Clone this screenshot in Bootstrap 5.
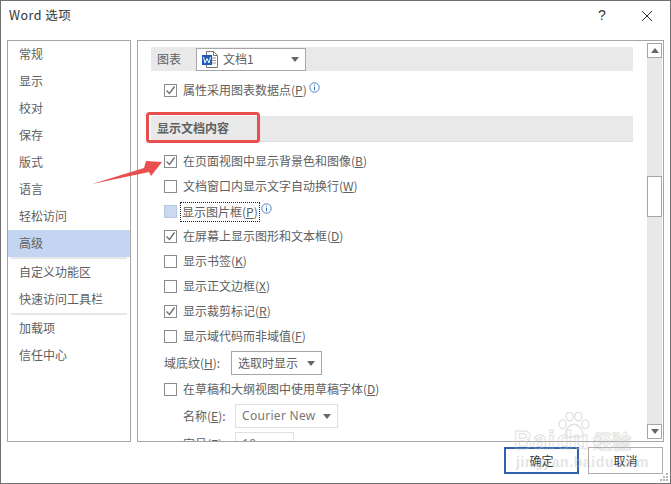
<!DOCTYPE html>
<html lang="zh">
<head>
<meta charset="utf-8">
<title>Word 选项</title>
<link href="https://cdn.jsdelivr.net/npm/bootstrap@5.3.0/dist/css/bootstrap.min.css" rel="stylesheet">
<style>
html,body{margin:0;height:484px;overflow:hidden;background:#fff}
body{font-family:"Noto Sans CJK SC","Noto Sans",sans-serif;font-size:12px;color:#606060;line-height:1.2}
u{text-underline-offset:1px}
.dlg{width:671px;height:484px;border:1px solid #6f6f6f;position:relative;background:#fff;overflow:hidden}
.dlg-title{height:39px;padding:0 0 0 8px;color:#333;font-size:12.5px}
.dlg-title .name{margin-top:-13px;letter-spacing:.5px}
.t-help{position:absolute;left:597px;top:6px;font-size:14px;color:#333;font-family:"Liberation Sans",sans-serif}
.t-close{position:absolute;left:640px;top:9px}
.dlg-body{height:402px;padding:0 7px 0 6px;gap:6px}
.side{width:124px;height:402px;border:1px solid #a6a6a6;flex:none}
.side-item{height:27px;padding:0 0 0 11px;color:#606060}
.side-item.on{background:#c3d5f0}
.side-sep{height:2px;margin:0 3px;background:#e6e6e6}
.pane{width:527px;height:402px;border:1px solid #a6a6a6;flex:none;overflow:hidden;position:relative}
.pane-in{width:482px;margin-left:13px;padding-top:6px}
.sec{background:#e9e9e9;padding-left:6px}
.sec1{height:24px}
.sec2{height:26px;margin-top:13px;font-weight:700;border-bottom:1px solid #ddd}
.opt{height:25px;padding-left:13px;gap:6px;white-space:nowrap;flex:none}
.opt-top{margin-top:7px}
.opt-sel{height:28px;gap:0}
.opt-sub{height:28px;padding-left:32px;gap:0}
.box{width:13px;height:13px;border:1px solid #8b8b8b;background:#fff;flex:none;display:flex;align-items:center;justify-content:center}
.box.dis{background:#ccd9ed;border-color:#b5c7e2}
.focus{outline:1px dotted #222;outline-offset:0;padding:0 1px;margin-left:-2px;line-height:18px}
.info{margin:-6px 0 0 -4px}
.info-f{margin:-6px 0 0 -4px}
.dd{height:24px;border:1px solid #a6a6a6;background:#fff;padding:0 0 0 6px;flex:none;white-space:nowrap}
.dd.lt{border-color:#e0e0e0}
.caret{width:0;height:0;border:4px solid transparent;border-top:5px solid #666;border-bottom:0;margin-left:auto;margin-right:6px}
.dd-doc{width:110px;margin-left:15px;height:23px;padding-left:5px;gap:5px}
.dd-sel{width:91px}
.dd-name{width:103px}
.dd-size{width:59px}
.lab{width:67px}
.lab-sub{width:52px}
.latin{font-family:"Noto Sans",sans-serif;color:#777;letter-spacing:.3px}
.scroll{position:absolute;left:509px;top:2px;width:15px;height:396px;background:#e8e8e8}
.sb-btn{width:15px;height:15px;background:#fff;border:1px solid #a6a6a6;position:absolute;left:0;display:flex;align-items:center;justify-content:center}
.sb-up{top:0}
.sb-dn{bottom:0}
.thumb{width:15px;height:41px;background:#fff;border:1px solid #a6a6a6;position:absolute;left:0;top:133px}
.up{width:0;height:0;border:4px solid transparent;border-bottom:5px solid #666;border-top:0}
.dn{width:0;height:0;border:4px solid transparent;border-top:5px solid #666;border-bottom:0}
.foot{padding:5px 7px 0 0;gap:9px}
.act{width:75px;height:27px;border:1px solid #adadad;background:#fff;color:#333;font-size:12px;padding:0;border-radius:0;line-height:1}
.act.pri{border:2px solid #2f62ae}
.mark-anno{position:absolute;left:-1px;top:-1px;pointer-events:none}
.wm{position:absolute;left:513px;top:425px;opacity:.45;pointer-events:none;white-space:nowrap}
.wm1{font:700 25px "Liberation Sans",sans-serif;position:absolute;left:0;top:0;color:transparent;-webkit-text-stroke:1px #bdbdbd;letter-spacing:1px}
.wm1b{left:43px}
.wm2{font:700 19px "Noto Sans CJK SC",sans-serif;position:absolute;left:79px;top:1px;color:transparent;-webkit-text-stroke:1px #bdbdbd}
.wm3{font:700 14px "Liberation Sans",sans-serif;position:absolute;left:2px;top:28px;color:#c4c4c4;letter-spacing:.6px}
.paw{position:absolute;left:42px;top:-14px}
.grip{position:absolute;right:1px;bottom:1px}
</style>
</head>
<body>
<div class="dlg">
  <div class="dlg-title d-flex align-items-center"><span class="name">Word 选项</span></div>
  <span class="t-help">?</span>
  <svg class="t-close" width="12" height="12" viewBox="0 0 12 12"><path d="M1 1l10 10M11 1L1 11" stroke="#333" stroke-width="1" fill="none"/></svg>

  <div class="dlg-body d-flex">
    <nav class="side d-flex flex-column">
      <div class="side-item d-flex align-items-center">常规</div>
      <div class="side-item d-flex align-items-center">显示</div>
      <div class="side-item d-flex align-items-center">校对</div>
      <div class="side-item d-flex align-items-center">保存</div>
      <div class="side-item d-flex align-items-center">版式</div>
      <div class="side-item d-flex align-items-center">语言</div>
      <div class="side-item d-flex align-items-center">轻松访问</div>
      <div class="side-item on d-flex align-items-center">高级</div>
      <div class="side-sep"></div>
      <div class="side-item d-flex align-items-center">自定义功能区</div>
      <div class="side-item d-flex align-items-center">快速访问工具栏</div>
      <div class="side-sep"></div>
      <div class="side-item d-flex align-items-center">加载项</div>
      <div class="side-item d-flex align-items-center">信任中心</div>
    </nav>

    <section class="pane">
      <div class="pane-in d-flex flex-column">
        <div class="sec sec1 d-flex align-items-center">
          <span>图表</span>
          <div class="dd dd-doc d-flex align-items-center">
            <svg width="16" height="17" viewBox="0 0 16 17"><path d="M4.5 .5h7l4 4v12h-11z" fill="#fff" stroke="#777"/><path d="M11.5 .5v4h4" fill="none" stroke="#777"/><path d="M10 7h4M10 9.5h4M10 12h4" stroke="#999"/><rect x="0" y="4" width="10" height="10" fill="#1e5bb8"/><path d="M1.5 6l1.5 6 2-4.5 2 4.5 1.5-6" stroke="#fff" fill="none"/></svg>
            <span>文档1</span><i class="caret"></i>
          </div>
        </div>
        <div class="opt opt-top d-flex align-items-center">
          <span class="box"><svg width="11" height="11" viewBox="0 0 11 11"><path d="M1.5 5.500l3 3 5-7" fill="none" stroke="#707070" stroke-width="1.400"/></svg></span>
          <span>属性采用图表数据点(<u>P</u>)</span>
          <svg class="info" width="11" height="11" viewBox="0 0 11 11"><circle cx="5.500" cy="5.500" r="4.700" fill="#fff" stroke="#4a86c8"/><path d="M5.500 2.500v1M5.500 4.700v3.600" stroke="#2f6db5"/></svg>
        </div>
        <div class="sec sec2 d-flex align-items-center">显示文档内容</div>
        <div class="opt opt-top d-flex align-items-center">
          <span class="box"><svg width="11" height="11" viewBox="0 0 11 11"><path d="M1.5 5.500l3 3 5-7" fill="none" stroke="#707070" stroke-width="1.400"/></svg></span>
          <span>在页面视图中显示背景色和图像(<u>B</u>)</span>
        </div>
        <div class="opt d-flex align-items-center"><span class="box"></span><span>文档窗口内显示文字自动换行(<u>W</u>)</span></div>
        <div class="opt d-flex align-items-center">
          <span class="box dis"></span><span class="focus">显示图片框(<u>P</u>)</span>
          <svg class="info-f" width="11" height="11" viewBox="0 0 11 11"><circle cx="5.500" cy="5.500" r="4.700" fill="#fff" stroke="#4a86c8"/><path d="M5.500 2.500v1M5.500 4.700v3.600" stroke="#2f6db5"/></svg>
        </div>
        <div class="opt d-flex align-items-center">
          <span class="box"><svg width="11" height="11" viewBox="0 0 11 11"><path d="M1.5 5.500l3 3 5-7" fill="none" stroke="#707070" stroke-width="1.400"/></svg></span>
          <span>在屏幕上显示图形和文本框(<u>D</u>)</span>
        </div>
        <div class="opt d-flex align-items-center"><span class="box"></span><span>显示书签(<u>K</u>)</span></div>
        <div class="opt d-flex align-items-center"><span class="box"></span><span>显示正文边框(<u>X</u>)</span></div>
        <div class="opt d-flex align-items-center">
          <span class="box"><svg width="11" height="11" viewBox="0 0 11 11"><path d="M1.5 5.500l3 3 5-7" fill="none" stroke="#707070" stroke-width="1.400"/></svg></span>
          <span>显示裁剪标记(<u>R</u>)</span>
        </div>
        <div class="opt d-flex align-items-center"><span class="box"></span><span>显示域代码而非域值(<u>F</u>)</span></div>
        <div class="opt opt-sel d-flex align-items-center">
          <span class="lab">域底纹(<u>H</u>):</span>
          <div class="dd dd-sel d-flex align-items-center"><span>选取时显示</span><i class="caret"></i></div>
        </div>
        <div class="opt d-flex align-items-center"><span class="box"></span><span>在草稿和大纲视图中使用草稿字体(<u>D</u>)</span></div>
        <div class="opt opt-sub d-flex align-items-center">
          <span class="lab-sub">名称(<u>E</u>):</span>
          <div class="dd lt dd-name d-flex align-items-center"><span class="latin">Courier New</span><i class="caret"></i></div>
        </div>
        <div class="opt opt-sub d-flex align-items-center">
          <span class="lab-sub">字号(<u>Z</u>):</span>
          <div class="dd lt dd-size d-flex align-items-center"><span class="latin">10</span></div>
        </div>
      </div>
      <div class="scroll">
        <div class="sb-btn sb-up"><i class="up"></i></div>
        <div class="thumb"></div>
        <div class="sb-btn sb-dn"><i class="dn"></i></div>
      </div>
    </section>
  </div>

  <div class="foot d-flex justify-content-end">
    <button type="button" class="btn act pri">确定</button>
    <button type="button" class="btn act">取消</button>
  </div>

  <svg class="mark-anno" width="671" height="484" viewBox="0 0 671 484">
    <rect x="147.500" y="113.500" width="111" height="28" rx="2" fill="none" stroke="#ea4f4f" stroke-width="3"/>
    <path d="M92 184L144 168L146 161L162 162L151 176L149 172z" fill="#ea4f4f"/>
  </svg>

  <div class="wm">
    <svg class="paw" width="36" height="28" viewBox="0 0 40 32"><g fill="none" stroke="#bdbdbd" stroke-width="1.500"><ellipse cx="7" cy="14" rx="4" ry="5"/><ellipse cx="15" cy="5" rx="4" ry="5"/><ellipse cx="25" cy="5" rx="4" ry="5"/><ellipse cx="33" cy="14" rx="4" ry="5"/><path d="M20 14c5 0 10 6 10 11 0 5-6 4-10 3-4 1-10 2-10-3 0-5 5-11 10-11z"/></g></svg>
    <span class="wm1">Bai</span><span class="wm1 wm1b">du</span><span class="wm2">经验</span><span class="wm3">jingyan.baidu.com</span>
  </div>

  <svg class="grip" width="9" height="9" viewBox="0 0 9 9" fill="#b5b5b5"><rect x="6" y="0" width="2" height="2"/><rect x="3" y="3" width="2" height="2"/><rect x="6" y="3" width="2" height="2"/><rect x="0" y="6" width="2" height="2"/><rect x="3" y="6" width="2" height="2"/><rect x="6" y="6" width="2" height="2"/></svg>
</div>
<script src="https://cdn.jsdelivr.net/npm/bootstrap@5.3.0/dist/js/bootstrap.bundle.min.js"></script>
</body>
</html>
